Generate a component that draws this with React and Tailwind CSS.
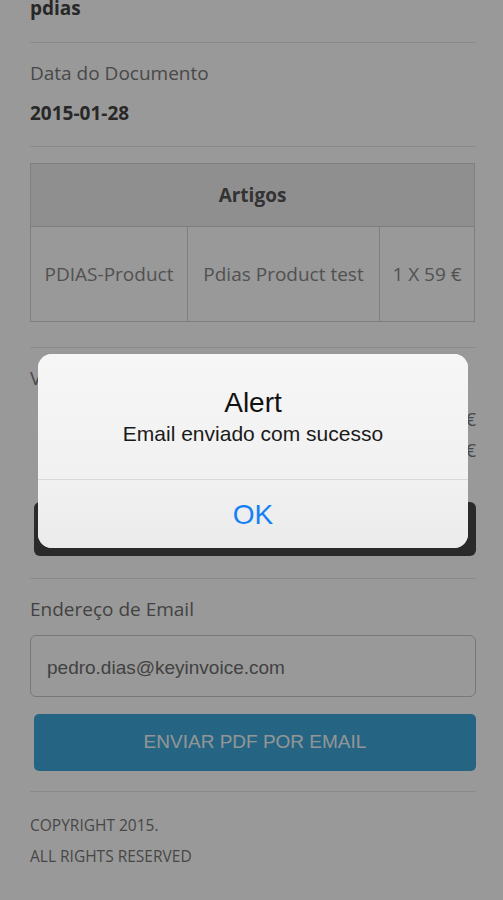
import React from "react";

const openSans = { fontFamily: '"Open Sans", "DejaVu Sans", sans-serif' };

const AlertDialog = () => (
  <div className="absolute left-[38px] top-[354px] w-[430px] h-[194px] rounded-[14px] bg-[#f4f4f4] flex flex-col overflow-hidden font-['Liberation_Sans',Arial,sans-serif]">
    <div className="h-[125px] flex flex-col items-center bg-gradient-to-b from-[#f6f6f6] to-[#f1f1f1]">
      <p className="mt-[33px] text-[28px] leading-[32px] text-[#111]">Alert</p>
      <p className="mt-[2px] text-[21px] leading-[26px] text-[#1a1a1a]">Email enviado com sucesso</p>
    </div>
    <div className="h-px bg-[#d9d9d9]" />
    <div className="flex-1 flex items-center justify-center bg-gradient-to-b from-[#f1f1f1] to-[#ebebeb]">
      <span className="mt-[2px] text-[28px] leading-[32px] text-[#1580f5]">OK</span>
    </div>
  </div>
);

export default function App() {
  return (
    <div className="relative w-[503px] h-[900px] overflow-hidden bg-white" style={openSans}>
      <div className="pl-[30px] pr-[27px]">
        {/* username */}
        <div className="pb-[21px] border-b border-[#e6e6e6]">
          <p className="-mt-[5px] text-[19px] leading-[26px] font-bold text-[#444]">pdias</p>
        </div>

        {/* document date */}
        <div className="pt-[17px] pb-[20px] border-b border-[#e6e6e6]">
          <p className="text-[19px] leading-[26px] text-[#7a7a7a]">Data do Documento</p>
          <p className="mt-[14px] text-[19px] leading-[26px] font-bold text-[#444]">2015-01-28</p>
        </div>

        {/* items table */}
        <div className="pt-[16px] pb-[25px] border-b border-[#e6e6e6]">
          <table className="w-[445px] border-collapse border border-[#d4d4d4] text-[19px] text-[#888]">
            <thead>
              <tr className="bg-[#eeeeee] h-[63px]">
                <th colSpan={3} className="font-bold text-[#555] border border-[#d4d4d4]">
                  Artigos
                </th>
              </tr>
            </thead>
            <tbody>
              <tr className="h-[95px]">
                <td className="w-[157px] text-center font-normal border border-[#d4d4d4]">PDIAS-Product</td>
                <td className="w-[192px] text-center font-normal border border-[#d4d4d4]">Pdias Product test</td>
                <td className="text-center font-normal border border-[#d4d4d4]">1 X 59 €</td>
              </tr>
            </tbody>
          </table>
        </div>

        {/* totals (behind the alert) */}
        <div className="pt-[17px] pb-[22px] border-b border-[#e6e6e6]">
          <p className="text-[19px] leading-[26px] text-[#7a7a7a]">Valores</p>
          <div className="mt-[15px] flex justify-end text-[19px] leading-[26px] text-[#7a7a7a]">
            <span>59 €</span>
          </div>
          <div className="mt-[5px] flex justify-end text-[19px] leading-[26px] text-[#7a7a7a]">
            <span>59 €</span>
          </div>
          <div className="mt-[39px] ml-[4px] w-[442px] h-[54px] rounded-[6px] bg-[#474747]" />
        </div>

        {/* email form */}
        <div className="pt-[17px] pb-[20px] border-b border-[#e6e6e6]">
          <p className="text-[19px] leading-[26px] text-[#6f6f6f]">Endereço de Email</p>
          <div className="mt-[13px] h-[62px] rounded-[6px] border border-[#c9c9c9] flex items-center px-[16px]">
            <span className="font-['Liberation_Sans',Arial,sans-serif] text-[19px] leading-[24px] mt-[3px] text-[#6e6e6e]">
              pedro.dias@keyinvoice.com
            </span>
          </div>
          <button className="mt-[17px] ml-[4px] w-[442px] h-[57px] rounded-[5px] bg-[#3ea8da] flex items-center justify-center">
            <span className="font-['Liberation_Sans',Arial,sans-serif] text-[19px] text-[#f2f8fb]">
              ENVIAR PDF POR EMAIL
            </span>
          </button>
        </div>

        {/* footer */}
        <div className="pt-[23px] text-[15.5px] leading-[20px] text-[#777]">
          <p>COPYRIGHT 2015.</p>
          <p className="mt-[11px]">ALL RIGHTS RESERVED</p>
        </div>
      </div>

      {/* dim overlay */}
      <div className="absolute inset-0 bg-black/40" />
      <AlertDialog />
    </div>
  );
}
